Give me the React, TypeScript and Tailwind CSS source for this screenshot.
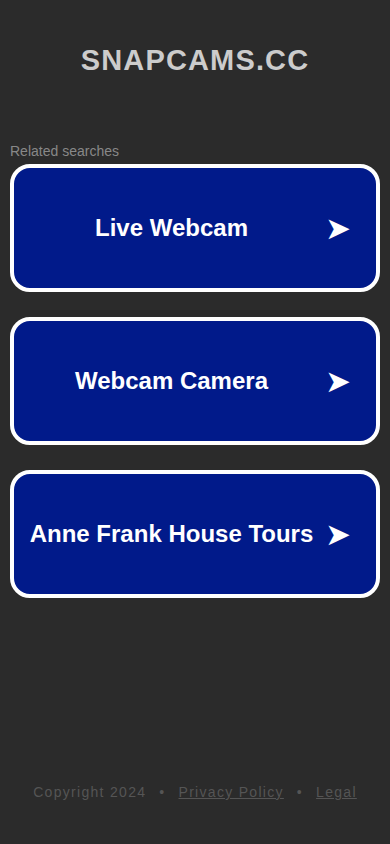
import React from "react";

const items = ["Live Webcam", "Webcam Camera", "Anne Frank House Tours"];

export default function App() {
  return (
    <div
      className="min-h-[844px] w-full bg-[#2b2b2b] flex flex-col"
      style={{ fontFamily: '"Liberation Sans", Arial, sans-serif' }}
    >
      <div className="pt-[44px] text-center">
        <h1 className="text-[29px] leading-[33px] font-bold tracking-[1.15px] text-[#cccccc]">
          SNAPCAMS.CC
        </h1>
      </div>
      <div className="px-[10px] mt-[66px]">
        <div className="text-[14px] leading-[17px] text-[#888888] mb-[4px]">Related searches</div>
        <div className="flex flex-col gap-[25px]">
          {items.map((t) => (
            <div
              key={t}
              className="h-[128px] rounded-[20px] border-4 border-white bg-[#011a8a] flex items-center"
            >
              <span className="flex-1 text-center text-white font-bold text-[24px] leading-[28px] pl-[4px]">
                {t}
              </span>
              <span
                className="w-[22px] text-center text-white text-[31px] leading-[32px] mr-[29px]"
                style={{ fontFamily: '"DejaVu Sans", sans-serif' }}
              >
                ➤
              </span>
            </div>
          ))}
        </div>
      </div>
      <div className="mt-auto pb-[43px] text-center text-[14px] leading-[17px] tracking-[1.3px] text-[#555555]">
        <span>Copyright 2024</span>
        <span className="mx-[13px]">•</span>
        <a className="underline text-[#555555]">Privacy Policy</a>
        <span className="mx-[13px]">•</span>
        <a className="underline text-[#555555]">Legal</a>
      </div>
    </div>
  );
}
